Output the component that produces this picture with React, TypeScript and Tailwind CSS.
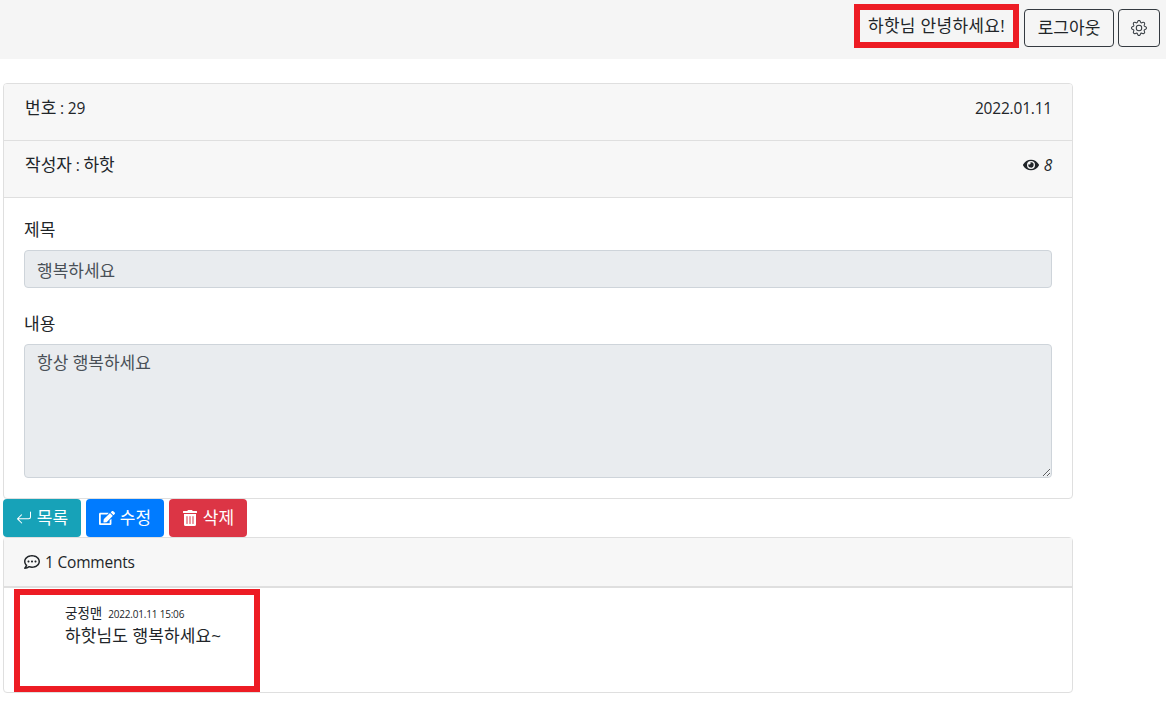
import type { ReactNode } from 'react';
import { BsArrowReturnLeft, BsGear } from 'react-icons/bs';
import { FaEdit, FaEye, FaRegCommentDots, FaTrashAlt } from 'react-icons/fa';

function K({ children }: { children: ReactNode }) {
  return <span className="text-[17px] leading-6 tracking-normal">{children}</span>;
}

function Btn({ color, icon, label }: { color: string; icon: ReactNode; label: string }) {
  return (
    <button className={`${color} flex h-[38px] w-[78px] items-center justify-center gap-[5px] rounded text-white`}>
      {icon}
      <K>{label}</K>
    </button>
  );
}

export default function App() {
  return (
    <div className="min-h-[706px] bg-white text-[15.5px] leading-6 tracking-[-0.2px] text-[#212529] [font-family:'Open_Sans','Noto_Sans_CJK_KR',sans-serif]">
      <nav className="flex h-[59px] items-start justify-end bg-[#f5f5f5] pr-1.5 pt-1">
        <div className="mr-[5px] flex h-[44px] w-[165px] items-center justify-center border-[6px] border-[#ed1c24] text-[17px] tracking-[0.3px]">
          하핫님 안녕하세요!
        </div>
        <button className="mr-1 mt-[5px] h-[38px] w-[90px] rounded border border-[#343a40]">
          <K>로그아웃</K>
        </button>
        <button className="mt-[5px] flex h-[38px] w-[42px] items-center justify-center rounded border border-[#343a40] text-[#343a40]">
          <BsGear size={16} />
        </button>
      </nav>

      <div className="ml-[3px] mt-6 w-[1070px]">
        <section className="overflow-hidden rounded border border-[#dfdfdf]">
          <div className="flex h-[57px] justify-between border-b border-[#dfdfdf] bg-[#f7f7f7] px-5 pt-3">
            <span className="ml-px"><K>번호</K> : 29</span>
            <span>2022.01.11</span>
          </div>
          <div className="flex h-[57px] justify-between border-b border-[#dfdfdf] bg-[#f7f7f7] px-5 pt-3">
            <span className="ml-px"><K>작성자</K> : <K>하핫</K></span>
            <span className="flex items-center gap-[5px] self-start italic">
              <FaEye size={16} />8
            </span>
          </div>
          <div className="p-5">
            <label className="mb-2 block"><K>제목</K></label>
            <input
              readOnly
              value="행복하세요"
              className="mb-6 block h-[38px] w-full rounded border border-[#ced4da] bg-[#e9ecef] px-3 text-[17px] tracking-normal text-[#495057] outline-none"
            />
            <label className="mb-2 block"><K>내용</K></label>
            <textarea
              readOnly
              value="항상 행복하세요"
              className="block h-[134px] w-full rounded border border-[#ced4da] bg-[#e9ecef] px-3 py-1.5 text-[17px] leading-6 tracking-normal text-[#495057] outline-none"
            />
          </div>
        </section>

        <div className="flex gap-[5px]">
          <Btn color="bg-[#17a2b8]" icon={<BsArrowReturnLeft size={16} />} label="목록" />
          <Btn color="bg-[#007bff]" icon={<FaEdit size={16} />} label="수정" />
          <Btn color="bg-[#dc3545]" icon={<FaTrashAlt size={16} />} label="삭제" />
        </div>

        <section className="rounded border border-[#dfdfdf]">
          <div className="flex h-[50px] items-center gap-[5px] border-b-2 border-[#dfdfdf] bg-[#f7f7f7] px-5 pb-px">
            <FaRegCommentDots size={16} /> 1 Comments
          </div>
          <div className="h-[104px] pl-[10px] pt-px">
            <div className="h-[103px] w-[246px] border-[6px] border-[#ed1c24] pl-[45px] pt-[6px]">
              <div className="flex h-[23px] items-baseline gap-[6px] leading-6 tracking-normal">
                <span className="text-[13.5px]">궁정맨</span>
                <span className="text-[10px] tracking-[-0.2px]">2022.01.11 15:06</span>
              </div>
              <div className="text-[17px] leading-6 tracking-[0.1px]">하핫님도 행복하세요~</div>
            </div>
          </div>
        </section>
      </div>
    </div>
  );
}
